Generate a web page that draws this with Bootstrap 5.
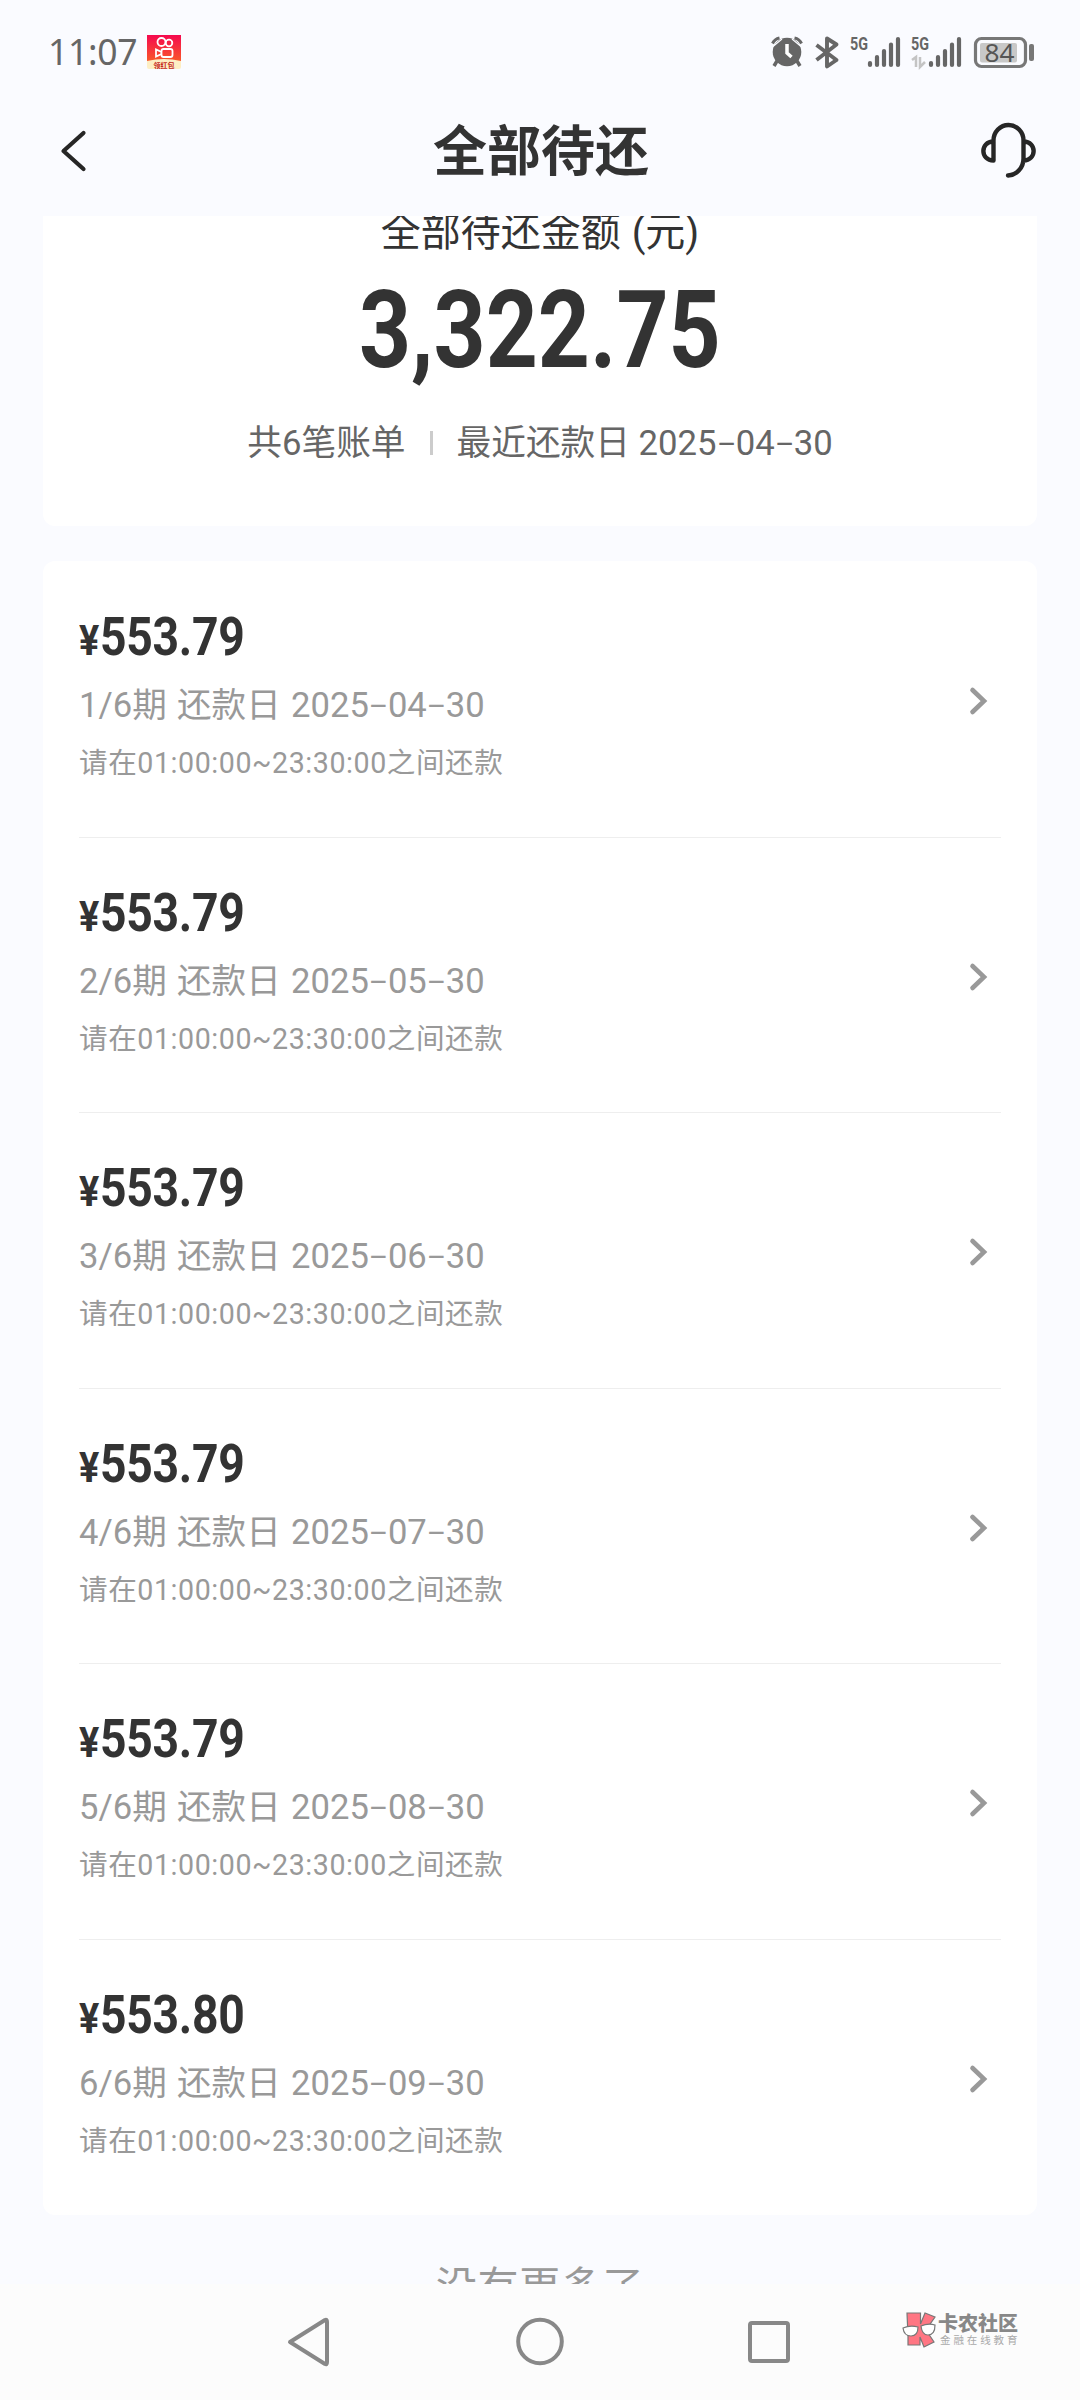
<!DOCTYPE html>
<html lang="zh-CN">
<head>
<meta charset="utf-8">
<meta name="viewport" content="width=device-width, initial-scale=1">
<title>全部待还</title>
<link href="https://cdn.jsdelivr.net/npm/bootstrap@5.3.0/dist/css/bootstrap.min.css" rel="stylesheet">
<style>
body{background:#fafbff;color:#333;font-family:Roboto,"Noto Sans CJK SC",sans-serif;width:1080px;height:2400px;overflow:hidden}
.status{height:100px;padding:4px 46px 0 48px;color:#666}
.clock{font:400 35.5px/1 "Noto Sans",sans-serif;letter-spacing:-.3px;width:99px}
.appbar{height:116px;padding:0 43px 14px 51px}
.appbar h1{font-size:54px;font-weight:700;line-height:1;padding:4px 4px 0 0}
.scroller{height:2068px;overflow:hidden}
.panel{margin:0 43px;background:#fff;border-radius:0 0 12px 12px}
.summary{height:310px}
.cap-line{font-size:40px;line-height:60px;margin-top:-13px;word-spacing:1px}
.total{font-size:107px;font-weight:700;line-height:100px;margin-top:18px}
.total span,.amt-num{display:inline-block;transform:scaleX(.85)}
.subline{font-size:34.7px;line-height:50px;color:#666;margin-top:37px}
.vsep{width:3px;height:24px;background:#ccc}
.dash{display:inline-block;width:.55em;text-align:center;transform:scaleX(1.75) scaleY(.85)}
.bills{margin-top:35px;border-radius:12px}
.bill{height:275.6px;margin:0 36px;padding:48px 13px 0 0;box-shadow:0 1px 0 #eee}
.bill:last-child{box-shadow:none}
.amt{font-weight:700;line-height:56px;height:56px;white-space:nowrap}
.yen{display:inline-block;font-size:42px;transform:scaleX(.9);transform-origin:0 50%;width:20.5px}
.amt-num{font-size:53.5px;transform-origin:0 50%;transform:scaleX(.865);letter-spacing:-.3px}
.l2{font-size:34.6px;line-height:50px;color:#999;margin-top:15px;word-spacing:1.5px;letter-spacing:.04px}
.l3{font-size:28.6px;line-height:40px;color:#999;margin-top:13px;letter-spacing:.56px}
.more{font-size:41px;line-height:60px;color:#999;margin-top:42px;letter-spacing:.6px}
.navkeys{height:116px;background:#fcfcfc;padding:0 62px 0 285px}
.wm-t{font-size:20px;line-height:20px;font-weight:900;color:#888}
.wm-s{font-size:10.5px;line-height:13px;letter-spacing:2.9px;color:#aaa;margin-right:-3px;padding-left:2px}
</style>
</head>
<body class="d-flex flex-column">
<header>
<div class="status d-flex align-items-center justify-content-between">
<div class="d-flex align-items-center">
<span class="clock">11:07</span>
<svg width="34" height="34" viewBox="0 0 34 34"><defs><linearGradient id="g" x1="0" y1="0" x2="0" y2="1"><stop offset="0" stop-color="#f5094f"/><stop offset="1" stop-color="#f9572a"/></linearGradient></defs><rect width="34" height="34" rx="2" fill="#fdeec4"/><path d="M0 0H34V26Q17 22 0 26Z" fill="url(#g)"/><g fill="none" stroke="#fff" stroke-width="1.800"><circle cx="14.500" cy="7" r="4"/><circle cx="22" cy="8" r="3.300"/><rect x="14.500" y="14" width="11" height="8" rx="2"/><path d="M14.500 17L9 14.500V21.500L14.500 19"/></g><text x="17" y="33" font-size="7" font-weight="700" fill="#c5281c" text-anchor="middle" font-family="Noto Sans CJK SC">领红包</text></svg>
</div>
<svg width="264" height="38" viewBox="770 33 264 38" fill="#666">
<circle cx="787" cy="52" r="14.300"/><path d="M777 61L774 66M797 61L800 66" stroke="#666" stroke-width="3.500"/><path d="M772.500 43.500A10 10 0 0 1 779.500 38M801.500 43.500A10 10 0 0 0 794.500 38" fill="none" stroke="#666" stroke-width="3"/><path d="M779 35.500" /><path d="M773 46.500L782 39M801 46.500L792 39" stroke="#fafbff" stroke-width="1.200"/><path d="M787 44V53L791.500 57" fill="none" stroke="#fff" stroke-width="3.500"/>
<path d="M816.500 45L836.500 60L827 66.500V38.500L836.500 44.500L816.500 60" fill="none" stroke="#666" stroke-width="3.900" stroke-linejoin="round"/>
<g id="sig"><text x="850" y="50" font-size="18" font-weight="700" font-family="Roboto" textLength="18" lengthAdjust="spacingAndGlyphs">5G</text><path d="M870 63V65M877 57V65M884 51V65M891 44.500V65M898 39V65" stroke="#666" stroke-width="4.200" stroke-linecap="round"/></g>
<use href="#sig" x="61"/>
<path d="M912 60L916 57V67M920 57V67L925 62" fill="none" stroke="#c4c4c4" stroke-width="2.500"/>
<rect x="975.500" y="38.500" width="50" height="28" rx="6" fill="none" stroke="#777" stroke-width="3.200"/><rect x="980" y="43" width="37" height="19.500" rx="2" fill="#c8c8c8"/><rect x="1029" y="44" width="5" height="17" rx="2" fill="#777"/><text x="984.500" y="61.500" font-size="26" fill="#555" font-family="Noto Sans" textLength="30" lengthAdjust="spacingAndGlyphs">84</text>
</svg>
</div>
<nav class="appbar d-flex align-items-center justify-content-between">
<svg width="56" height="56" viewBox="50 123 56 56"><path d="M82.500 133L62.500 151L82.500 169" fill="none" stroke="#262626" stroke-width="4.200" stroke-linecap="round" stroke-linejoin="round"/></svg>
<h1 class="m-0">全部待还</h1>
<svg width="58" height="58" viewBox="979 121.500 58 58"><path d="M993.500 160V140A15 15.500 0 0 1 1023.500 140V158A16 17 0 0 1 1008 175M993.500 141C980 141 980 160 993.500 160M1023.500 141C1037 141 1037 160 1023.500 160" fill="none" stroke="#262626" stroke-width="4.400" stroke-linecap="round" stroke-linejoin="round"/></svg>
</nav>
</header>
<main class="scroller">
<section class="panel summary d-flex flex-column align-items-center">
<div class="cap-line">全部待还金额 (元)</div>
<div class="total"><span>3,322.75</span></div>
<div class="subline d-flex align-items-center"><span>共6笔账单</span><span class="vsep mx-4"></span><span>最近还款日 2025<span class="dash">-</span>04<span class="dash">-</span>30</span></div>
</section>
<section class="panel bills" id="bills"></section>
<div class="more text-center">没有更多了</div>
</main>
<footer class="navkeys d-flex align-items-center justify-content-between">
<svg width="510" height="60" viewBox="285 2312 510 60" fill="none" stroke="#888" stroke-width="4" stroke-linejoin="round"><path d="M290 2342L325 2320Q327 2319 327 2322V2362Q327 2365 325 2364L290 2342Z"/><circle cx="540" cy="2341.500" r="21.800"/><rect x="750" y="2323" width="38" height="38" rx="2"/></svg>
<div class="d-flex align-items-center pb-4">
<svg width="36" height="36" viewBox="0 0 36 36"><path d="M5 1H18.500V12L23 1L33 5L24 18L32 30L22 35L18 25V33H6V24Z" fill="#ff7683" stroke="#777" stroke-width="1.200"/><path d="M1 16Q8 13 16 15Q16 24 9 24Q2 24 1 16ZM19 14Q26 11 33 13Q33 23 26 23Q20 23 19 14Z" fill="#fff" stroke="#777" stroke-width="1.200"/></svg>
<div><div class="wm-t">卡农社区</div><div class="wm-s">金融在线教育</div></div>
</div>
</footer>
<script>
const bills = [["553.79","04"],["553.79","05"],["553.79","06"],["553.79","07"],["553.79","08"],["553.80","09"]];
document.getElementById("bills").innerHTML = bills.map(([sum, month], i) => `
<div class="bill d-flex justify-content-between"><div>
<div class="amt"><span class="yen">¥</span><span class="amt-num">${sum}</span></div>
<div class="l2">${i + 1}/6期 还款日 2025<span class="dash">-</span>${month}<span class="dash">-</span>30</div>
<div class="l3">请在01:00:00~23:30:00之间还款</div></div>
<svg class="mt-5" width="20" height="88" viewBox="968 657 20 88"><path d="M972.500 690L984 701L972.500 712" fill="none" stroke="#999" stroke-width="4.600" stroke-linecap="round"/></svg></div>`).join("");
</script>
<script src="https://cdn.jsdelivr.net/npm/bootstrap@5.3.0/dist/js/bootstrap.bundle.min.js"></script>
</body>
</html>
